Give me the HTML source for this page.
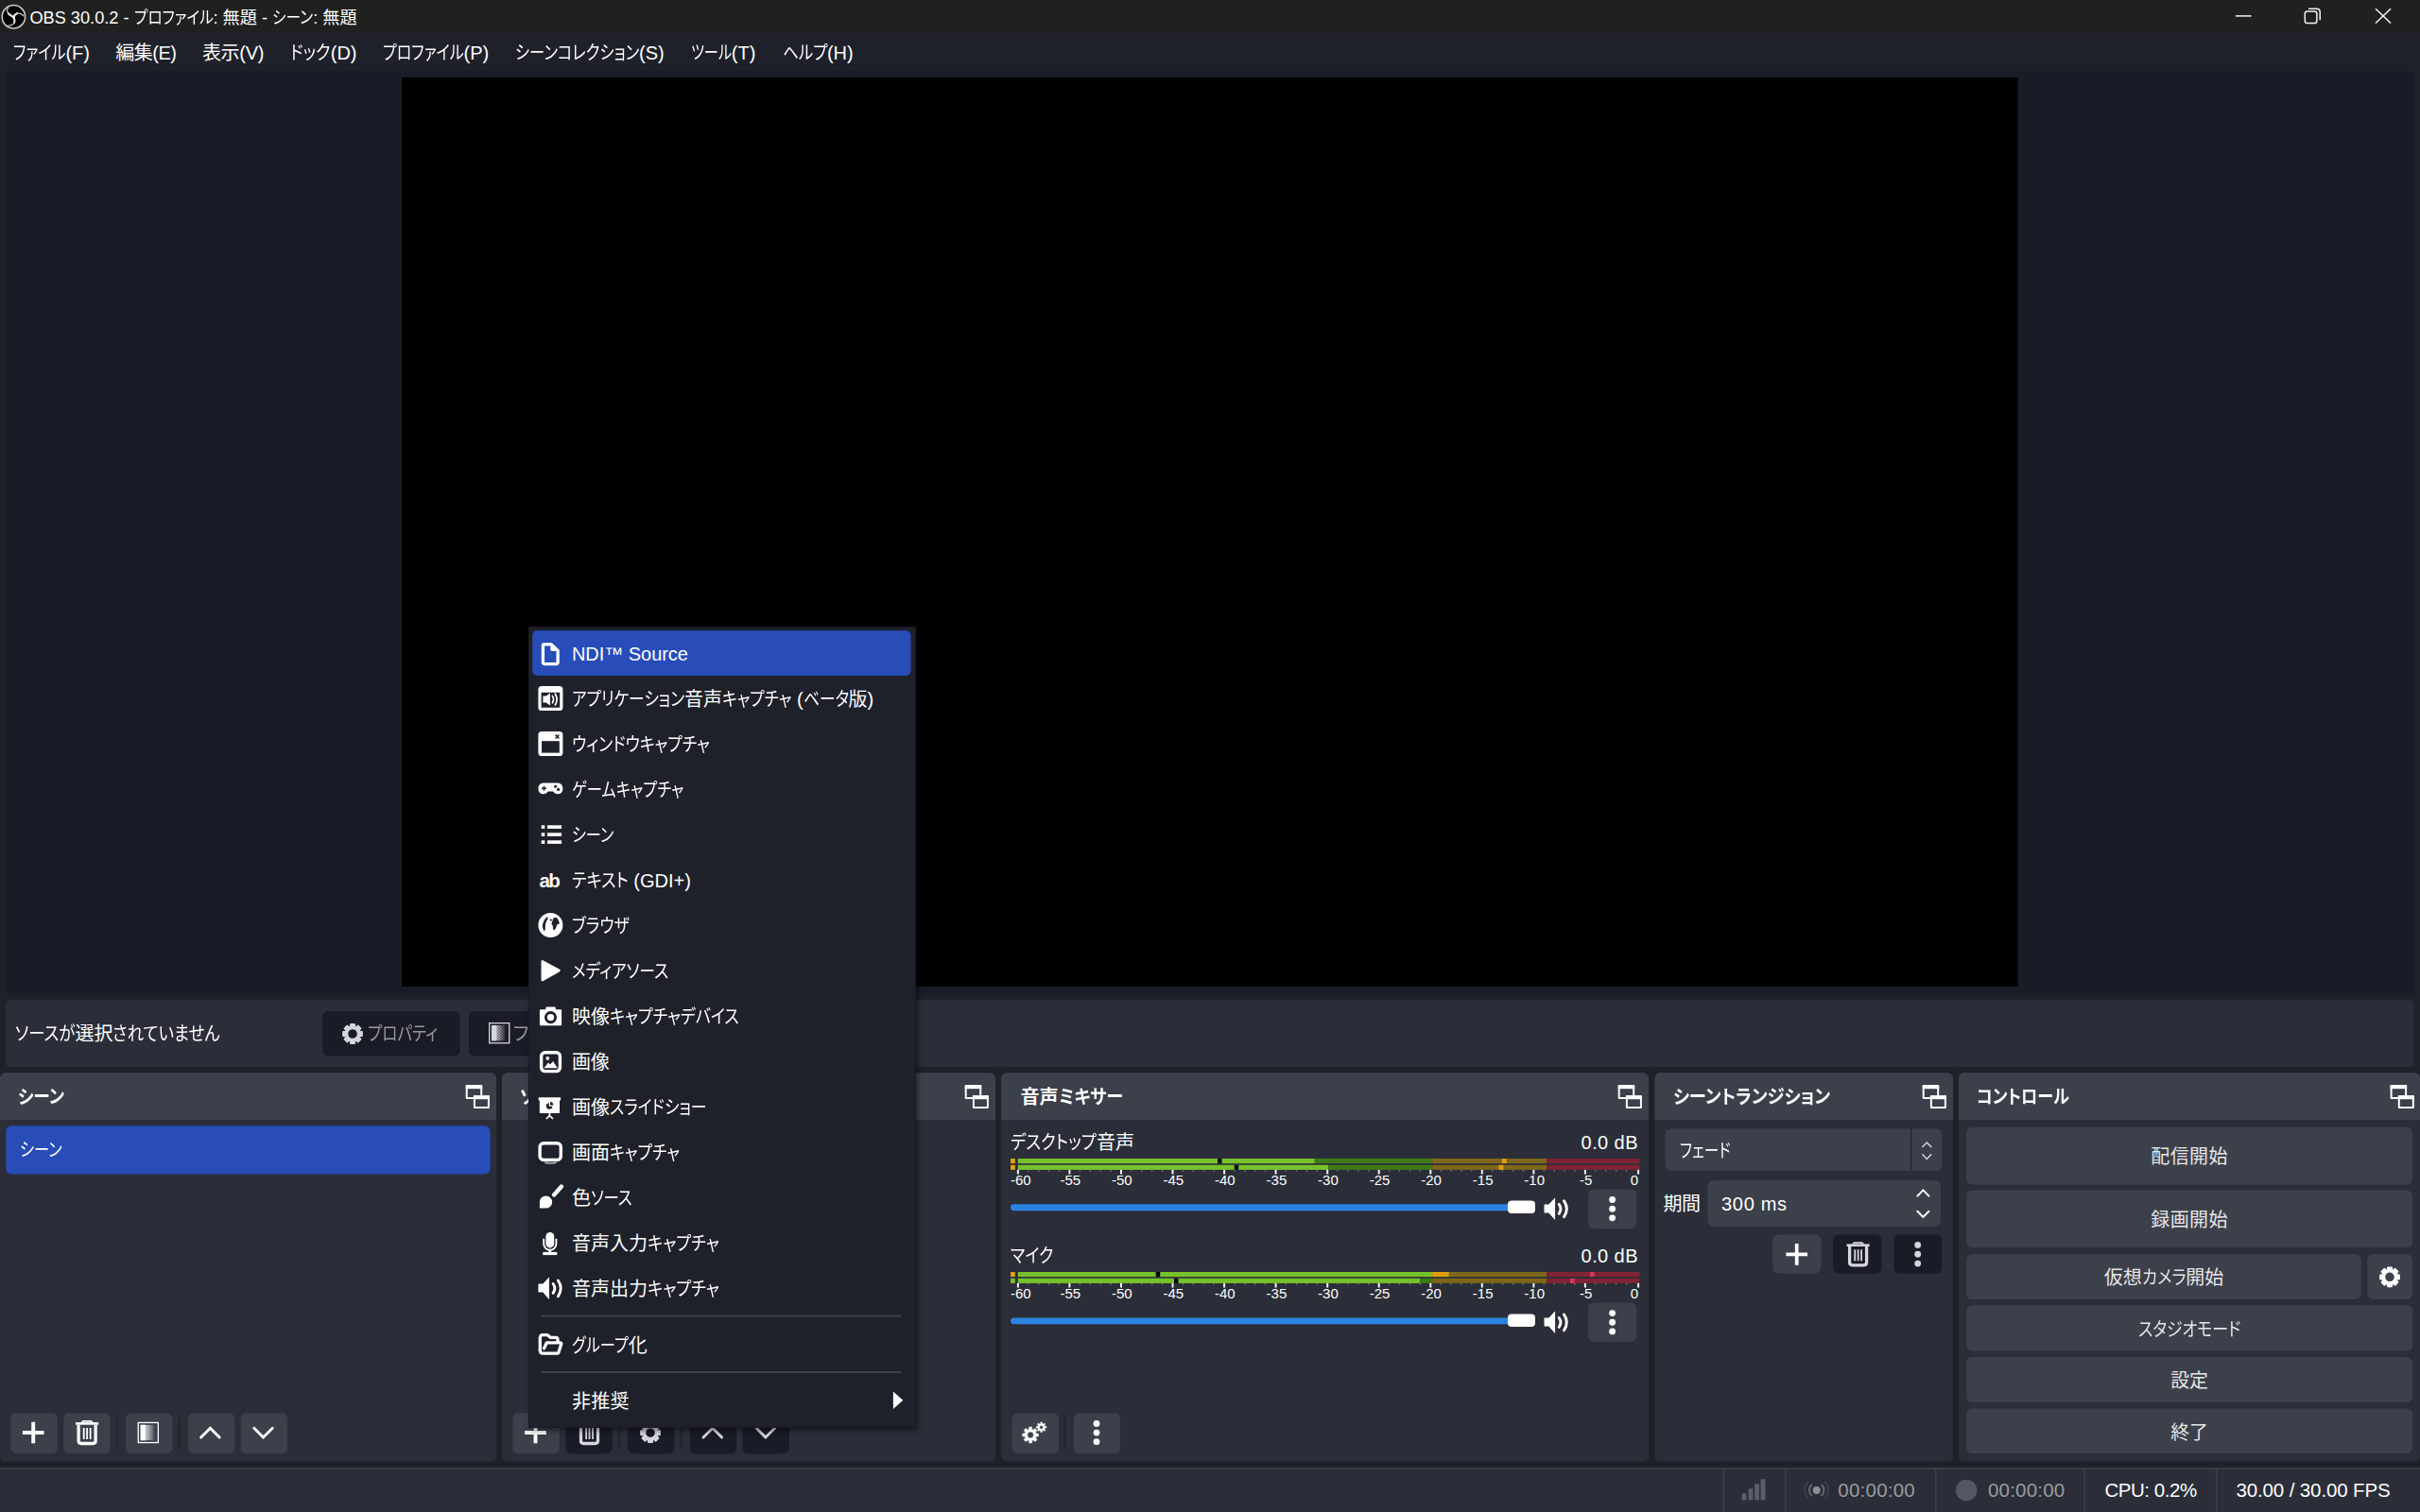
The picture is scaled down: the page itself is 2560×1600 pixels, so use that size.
<!DOCTYPE html>
<html lang="ja"><head><meta charset="utf-8"><title>OBS 30.0.2</title><style>
html,body{margin:0;padding:0;}
body{width:2560px;height:1600px;overflow:hidden;background:#1f212a;position:relative;font-family:"Liberation Sans","Noto Sans CJK JP",sans-serif;font-feature-settings:"palt";-webkit-font-smoothing:antialiased;}
.a{position:absolute;display:block;}
.t{position:absolute;white-space:nowrap;line-height:30px;}
.k{display:inline-block;}
.k>span{display:inline-block;transform-origin:0 50%;}
</style></head>
<body>
<svg class="a" style="left:0;top:0" width="2560" height="1600" viewBox="0 0 2560 1600">
<rect x="0.00" y="0.00" width="2560.00" height="35.00" fill="#202020"/>
<rect x="6.00" y="75.00" width="2547.00" height="977.00" fill="#191b26"/>
<rect x="425.00" y="82.00" width="1709.50" height="962.00" fill="#000"/>
<rect x="6.00" y="1058.00" width="2547.60" height="71.20" rx="5" fill="#2b2e38"/>
<path d="M6.00 1135.20H519.00A6.0 6.0 0 0 1 525.00 1141.20V1541.30A5.0 5.0 0 0 1 520.00 1546.30H5.00A5.0 5.0 0 0 1 0.00 1541.30V1141.20A6.0 6.0 0 0 1 6.00 1135.20Z" fill="#2b2e38"/>
<path d="M6.00 1135.20H519.00A6.0 6.0 0 0 1 525.00 1141.20V1184.90H0.00V1141.20A6.0 6.0 0 0 1 6.00 1135.20Z" fill="#3c404b"/>
<path d="M537.00 1135.20H1047.00A6.0 6.0 0 0 1 1053.00 1141.20V1541.30A5.0 5.0 0 0 1 1048.00 1546.30H536.00A5.0 5.0 0 0 1 531.00 1541.30V1141.20A6.0 6.0 0 0 1 537.00 1135.20Z" fill="#2b2e38"/>
<path d="M537.00 1135.20H1047.00A6.0 6.0 0 0 1 1053.00 1141.20V1184.90H531.00V1141.20A6.0 6.0 0 0 1 537.00 1135.20Z" fill="#3c404b"/>
<path d="M1065.00 1135.20H1738.00A6.0 6.0 0 0 1 1744.00 1141.20V1541.30A5.0 5.0 0 0 1 1739.00 1546.30H1064.00A5.0 5.0 0 0 1 1059.00 1541.30V1141.20A6.0 6.0 0 0 1 1065.00 1135.20Z" fill="#2b2e38"/>
<path d="M1065.00 1135.20H1738.00A6.0 6.0 0 0 1 1744.00 1141.20V1184.90H1059.00V1141.20A6.0 6.0 0 0 1 1065.00 1135.20Z" fill="#3c404b"/>
<path d="M1756.50 1135.20H2060.00A6.0 6.0 0 0 1 2066.00 1141.20V1541.30A5.0 5.0 0 0 1 2061.00 1546.30H1755.50A5.0 5.0 0 0 1 1750.50 1541.30V1141.20A6.0 6.0 0 0 1 1756.50 1135.20Z" fill="#2b2e38"/>
<path d="M1756.50 1135.20H2060.00A6.0 6.0 0 0 1 2066.00 1141.20V1184.90H1750.50V1141.20A6.0 6.0 0 0 1 1756.50 1135.20Z" fill="#3c404b"/>
<path d="M2078.00 1135.20H2554.00A6.0 6.0 0 0 1 2560.00 1141.20V1541.30A5.0 5.0 0 0 1 2555.00 1546.30H2077.00A5.0 5.0 0 0 1 2072.00 1541.30V1141.20A6.0 6.0 0 0 1 2078.00 1135.20Z" fill="#2b2e38"/>
<path d="M2078.00 1135.20H2554.00A6.0 6.0 0 0 1 2560.00 1141.20V1184.90H2072.00V1141.20A6.0 6.0 0 0 1 2078.00 1135.20Z" fill="#3c404b"/>
<rect x="0.00" y="1553.00" width="2560.00" height="47.00" fill="#2b2e38"/>
<rect x="0.00" y="1553.00" width="2560.00" height="1.50" fill="#3c404b"/>
<rect x="1822.50" y="1554.00" width="1.50" height="46.00" fill="#3c404b"/>
<rect x="1888.00" y="1554.00" width="1.50" height="46.00" fill="#3c404b"/>
<rect x="2047.00" y="1554.00" width="1.50" height="46.00" fill="#3c404b"/>
<rect x="2204.50" y="1554.00" width="1.50" height="46.00" fill="#3c404b"/>
<rect x="2344.00" y="1554.00" width="1.50" height="46.00" fill="#3c404b"/>
</svg>
<div class="t" style="left:31.4px;top:4.3px;font-size:18.2px;color:#fefefe;"><span id="t0">OBS 30.0.2 - <span class="k" style="width:83.91px"><span style="transform:scaleX(0.8610)">プロファイル</span></span>: 無題 - <span class="k" style="width:43.05px"><span style="transform:scaleX(0.8610)">シーン</span></span>: 無題</span></div>
<div class="t" style="left:14.0px;top:41.1px;font-size:20px;color:#fefefe;"><span id="t1"><span class="k" style="width:55.45px"><span style="transform:scaleX(0.8006)">ファイル</span></span>(F)</span></div>
<div class="t" style="left:122.3px;top:41.1px;font-size:20px;color:#fefefe;letter-spacing:-0.51px;"><span id="t2">編集(E)</span></div>
<div class="t" style="left:213.9px;top:41.1px;font-size:20px;color:#fefefe;letter-spacing:-0.27px;"><span id="t3">表示(V)</span></div>
<div class="t" style="left:307.3px;top:41.1px;font-size:20px;color:#fefefe;"><span id="t4"><span class="k" style="width:42.43px"><span style="transform:scaleX(0.8564)">ドック</span></span>(D)</span></div>
<div class="t" style="left:404.8px;top:41.1px;font-size:20px;color:#fefefe;"><span id="t5"><span class="k" style="width:85.73px"><span style="transform:scaleX(0.7999)">プロファイル</span></span>(P)</span></div>
<div class="t" style="left:544.9px;top:41.1px;font-size:20px;color:#fefefe;"><span id="t6"><span class="k" style="width:131.13px"><span style="transform:scaleX(0.8160)">シーンコレクション</span></span>(S)</span></div>
<div class="t" style="left:730.8px;top:41.1px;font-size:20px;color:#fefefe;"><span id="t7"><span class="k" style="width:43.05px"><span style="transform:scaleX(0.7576)">ツール</span></span>(T)</span></div>
<div class="t" style="left:827.5px;top:41.1px;font-size:20px;color:#fefefe;"><span id="t8"><span class="k" style="width:47.43px"><span style="transform:scaleX(0.8265)">ヘルプ</span></span>(H)</span></div>
<div class="t" style="left:16.0px;top:1079.1px;font-size:20px;color:#fefefe;"><span id="t9"><span class="k" style="width:63.43px"><span style="transform:scaleX(0.8715)">ソースが</span></span>選択<span class="k" style="width:113.57px"><span style="transform:scaleX(0.8715)">されていません</span></span></span></div>
<svg class="a" style="left:0;top:0" width="2560" height="1600" viewBox="0 0 2560 1600">
<rect x="341.00" y="1070.00" width="145.50" height="47.50" rx="6" fill="#191b26"/>
</svg>
<div class="t" style="left:389.3px;top:1079.1px;font-size:20px;color:#9a9a9e;"><span id="t10"><span class="k" style="width:73.90px"><span style="transform:scaleX(0.8290)">プロパティ</span></span></span></div>
<svg class="a" style="left:0;top:0" width="2560" height="1600" viewBox="0 0 2560 1600">
<rect x="496.00" y="1070.00" width="144.00" height="47.50" rx="6" fill="#191b26"/>
</svg>
<div class="t" style="left:543.0px;top:1079.1px;font-size:20px;color:#9a9a9e;"><span id="t11"><span class="k" style="width:66.00px"><span style="transform:scaleX(0.9717)">フィルタ</span></span></span></div>
<div class="t" style="left:19.3px;top:1145.6px;font-size:20px;color:#fefefe;font-weight:700;"><span id="t12"><span class="k" style="width:48.90px"><span style="transform:scaleX(0.8861)">シーン</span></span></span></div>
<div class="t" style="left:550.3px;top:1145.6px;font-size:20px;color:#fefefe;font-weight:700;"><span id="t13"><span class="k" style="width:48.70px"><span style="transform:scaleX(0.8802)">ソース</span></span></span></div>
<div class="t" style="left:1079.6px;top:1145.6px;font-size:20px;color:#fefefe;font-weight:700;"><span id="t14">音声<span class="k" style="width:68.40px"><span style="transform:scaleX(0.9168)">ミキサー</span></span></span></div>
<div class="t" style="left:1769.8px;top:1145.6px;font-size:20px;color:#fefefe;font-weight:700;"><span id="t15"><span class="k" style="width:166.20px"><span style="transform:scaleX(0.9181)">シーントランジション</span></span></span></div>
<div class="t" style="left:2091.4px;top:1145.6px;font-size:20px;color:#fefefe;font-weight:700;"><span id="t16"><span class="k" style="width:98.00px"><span style="transform:scaleX(0.8608)">コントロール</span></span></span></div>
<svg class="a" style="left:0;top:0" width="2560" height="1600" viewBox="0 0 2560 1600">
<rect x="6.30" y="1191.30" width="512.40" height="51.20" rx="6" fill="#284cb8"/>
</svg>
<div class="t" style="left:21.0px;top:1202.1px;font-size:20px;color:#fefefe;"><span id="t17"><span class="k" style="width:44.70px"><span style="transform:scaleX(0.8130)">シーン</span></span></span></div>
<svg class="a" style="left:0;top:0" width="2560" height="1600" viewBox="0 0 2560 1600">
<rect x="11.40" y="1495.20" width="49.30" height="43.00" rx="6" fill="#3c404b"/>
<rect x="67.20" y="1495.20" width="49.30" height="43.00" rx="6" fill="#3c404b"/>
<rect x="133.10" y="1495.20" width="49.30" height="43.00" rx="6" fill="#3c404b"/>
<rect x="198.90" y="1495.20" width="49.30" height="43.00" rx="6" fill="#3c404b"/>
<rect x="254.70" y="1495.20" width="49.30" height="43.00" rx="6" fill="#3c404b"/>
<rect x="123.00" y="1499.00" width="2.00" height="35.00" fill="#22242d"/>
<rect x="188.70" y="1499.00" width="2.00" height="35.00" fill="#22242d"/>
<rect x="542.40" y="1495.20" width="49.30" height="43.00" rx="6" fill="#3c404b"/>
<rect x="598.40" y="1495.20" width="49.30" height="43.00" rx="6" fill="#191b26"/>
<rect x="664.00" y="1495.20" width="49.30" height="43.00" rx="6" fill="#191b26"/>
<rect x="729.80" y="1495.20" width="49.30" height="43.00" rx="6" fill="#191b26"/>
<rect x="785.60" y="1495.20" width="49.30" height="43.00" rx="6" fill="#191b26"/>
<rect x="654.00" y="1499.00" width="2.00" height="35.00" fill="#22242d"/>
<rect x="719.70" y="1499.00" width="2.00" height="35.00" fill="#22242d"/>
<rect x="1070.60" y="1495.20" width="49.30" height="43.00" rx="6" fill="#3c404b"/>
<rect x="1135.80" y="1495.20" width="49.30" height="43.00" rx="6" fill="#3c404b"/>
<rect x="1125.40" y="1499.00" width="2.00" height="35.00" fill="#22242d"/>
</svg>
<div class="t" style="left:1069.0px;top:1194.3px;font-size:20px;color:#fefefe;"><span id="t18"><span class="k" style="width:90.90px"><span style="transform:scaleX(0.8723)">デスクトップ</span></span>音声</span></div>
<div class="t" style="left:1672.6px;top:1194.1px;font-size:20px;color:#fefefe;letter-spacing:0.41px;"><span id="t19">0.0 dB</span></div>
<svg class="a" style="left:0;top:0" width="2560" height="1600" viewBox="0 0 2560 1600">
<rect x="1069.00" y="1274.30" width="531.00" height="6.90" rx="3.5" fill="#2b83e0"/>
<rect x="1595.00" y="1270.50" width="29.00" height="13.50" rx="4" fill="#ffffff"/>
<rect x="1680.00" y="1258.50" width="51.30" height="41.50" rx="6" fill="#3c404b"/>
</svg>
<div class="t" style="left:1069.0px;top:1314.4px;font-size:20px;color:#fefefe;"><span id="t20"><span class="k" style="width:45.30px"><span style="transform:scaleX(0.8532)">マイク</span></span></span></div>
<div class="t" style="left:1672.6px;top:1314.2px;font-size:20px;color:#fefefe;letter-spacing:0.41px;"><span id="t21">0.0 dB</span></div>
<svg class="a" style="left:0;top:0" width="2560" height="1600" viewBox="0 0 2560 1600">
<rect x="1069.00" y="1394.40" width="531.00" height="6.90" rx="3.5" fill="#2b83e0"/>
<rect x="1595.00" y="1390.60" width="29.00" height="13.50" rx="4" fill="#ffffff"/>
<rect x="1680.00" y="1378.60" width="51.30" height="41.50" rx="6" fill="#3c404b"/>
<rect x="1069.00" y="1226.00" width="4.90" height="5.10" fill="#dca00a"/>
<rect x="1076.80" y="1226.00" width="438.40" height="5.10" fill="#3f7a16"/>
<rect x="1515.20" y="1226.00" width="121.00" height="5.10" fill="#7e671a"/>
<rect x="1636.20" y="1226.00" width="98.30" height="5.10" fill="#7e2435"/>
<rect x="1076.80" y="1226.00" width="313.70" height="5.10" fill="#76c22b"/>
<rect x="1288.00" y="1226.00" width="4.50" height="5.10" fill="#000"/>
<rect x="1588.80" y="1226.00" width="4.90" height="5.10" fill="#dca00a"/>
<rect x="1069.00" y="1232.80" width="4.90" height="5.10" fill="#dca00a"/>
<rect x="1076.80" y="1232.80" width="438.40" height="5.10" fill="#3f7a16"/>
<rect x="1515.20" y="1232.80" width="121.00" height="5.10" fill="#7e671a"/>
<rect x="1636.20" y="1232.80" width="98.30" height="5.10" fill="#7e2435"/>
<rect x="1076.80" y="1232.80" width="328.20" height="5.10" fill="#76c22b"/>
<rect x="1305.70" y="1232.80" width="4.50" height="5.10" fill="#000"/>
<rect x="1585.50" y="1232.80" width="4.90" height="5.10" fill="#dca00a"/>
<g transform="translate(1075.80 1237.90)"><rect x="0.1" y="0" width="2" height="4.6" fill="#f4f4f6"/><rect x="11.4" y="0" width="1.2" height="2" fill="#6b6e78"/><rect x="22.3" y="0" width="1.2" height="2" fill="#6b6e78"/><rect x="33.2" y="0" width="1.2" height="2" fill="#6b6e78"/><rect x="44.1" y="0" width="1.2" height="2" fill="#6b6e78"/><rect x="54.6" y="0" width="2" height="4.6" fill="#f4f4f6"/><rect x="66.0" y="0" width="1.2" height="2" fill="#6b6e78"/><rect x="76.9" y="0" width="1.2" height="2" fill="#6b6e78"/><rect x="87.8" y="0" width="1.2" height="2" fill="#6b6e78"/><rect x="98.7" y="0" width="1.2" height="2" fill="#6b6e78"/><rect x="109.2" y="0" width="2" height="4.6" fill="#f4f4f6"/><rect x="120.5" y="0" width="1.2" height="2" fill="#6b6e78"/><rect x="131.4" y="0" width="1.2" height="2" fill="#6b6e78"/><rect x="142.3" y="0" width="1.2" height="2" fill="#6b6e78"/><rect x="153.2" y="0" width="1.2" height="2" fill="#6b6e78"/><rect x="163.7" y="0" width="2" height="4.6" fill="#f4f4f6"/><rect x="175.0" y="0" width="1.2" height="2" fill="#6b6e78"/><rect x="186.0" y="0" width="1.2" height="2" fill="#6b6e78"/><rect x="196.9" y="0" width="1.2" height="2" fill="#6b6e78"/><rect x="207.8" y="0" width="1.2" height="2" fill="#6b6e78"/><rect x="218.3" y="0" width="2" height="4.6" fill="#f4f4f6"/><rect x="229.6" y="0" width="1.2" height="2" fill="#6b6e78"/><rect x="240.5" y="0" width="1.2" height="2" fill="#6b6e78"/><rect x="251.4" y="0" width="1.2" height="2" fill="#6b6e78"/><rect x="262.3" y="0" width="1.2" height="2" fill="#6b6e78"/><rect x="272.8" y="0" width="2" height="4.6" fill="#f4f4f6"/><rect x="284.1" y="0" width="1.2" height="2" fill="#6b6e78"/><rect x="295.0" y="0" width="1.2" height="2" fill="#6b6e78"/><rect x="306.0" y="0" width="1.2" height="2" fill="#6b6e78"/><rect x="316.9" y="0" width="1.2" height="2" fill="#6b6e78"/><rect x="327.4" y="0" width="2" height="4.6" fill="#f4f4f6"/><rect x="338.7" y="0" width="1.2" height="2" fill="#6b6e78"/><rect x="349.6" y="0" width="1.2" height="2" fill="#6b6e78"/><rect x="360.5" y="0" width="1.2" height="2" fill="#6b6e78"/><rect x="371.4" y="0" width="1.2" height="2" fill="#6b6e78"/><rect x="381.9" y="0" width="2" height="4.6" fill="#f4f4f6"/><rect x="393.2" y="0" width="1.2" height="2" fill="#6b6e78"/><rect x="404.1" y="0" width="1.2" height="2" fill="#6b6e78"/><rect x="415.0" y="0" width="1.2" height="2" fill="#6b6e78"/><rect x="426.0" y="0" width="1.2" height="2" fill="#6b6e78"/><rect x="436.5" y="0" width="2" height="4.6" fill="#f4f4f6"/><rect x="447.8" y="0" width="1.2" height="2" fill="#6b6e78"/><rect x="458.7" y="0" width="1.2" height="2" fill="#6b6e78"/><rect x="469.6" y="0" width="1.2" height="2" fill="#6b6e78"/><rect x="480.5" y="0" width="1.2" height="2" fill="#6b6e78"/><rect x="491.0" y="0" width="2" height="4.6" fill="#f4f4f6"/><rect x="502.3" y="0" width="1.2" height="2" fill="#6b6e78"/><rect x="513.2" y="0" width="1.2" height="2" fill="#6b6e78"/><rect x="524.1" y="0" width="1.2" height="2" fill="#6b6e78"/><rect x="535.0" y="0" width="1.2" height="2" fill="#6b6e78"/><rect x="545.6" y="0" width="2" height="4.6" fill="#f4f4f6"/><rect x="556.9" y="0" width="1.2" height="2" fill="#6b6e78"/><rect x="567.8" y="0" width="1.2" height="2" fill="#6b6e78"/><rect x="578.7" y="0" width="1.2" height="2" fill="#6b6e78"/><rect x="589.6" y="0" width="1.2" height="2" fill="#6b6e78"/><rect x="600.1" y="0" width="2" height="4.6" fill="#f4f4f6"/><rect x="611.4" y="0" width="1.2" height="2" fill="#6b6e78"/><rect x="622.3" y="0" width="1.2" height="2" fill="#6b6e78"/><rect x="633.2" y="0" width="1.2" height="2" fill="#6b6e78"/><rect x="644.1" y="0" width="1.2" height="2" fill="#6b6e78"/><rect x="656.3" y="0" width="2" height="4.6" fill="#f4f4f6"/></g>
</svg>
<div class="t" style="left:1069.0px;top:1233.8px;font-size:15px;color:#fefefe;"><span id="t22">-60</span></div>
<div class="t" style="left:1121.4px;top:1233.8px;font-size:15px;color:#fefefe;"><span id="t23">-55</span></div>
<div class="t" style="left:1175.9px;top:1233.8px;font-size:15px;color:#fefefe;"><span id="t24">-50</span></div>
<div class="t" style="left:1230.5px;top:1233.8px;font-size:15px;color:#fefefe;"><span id="t25">-45</span></div>
<div class="t" style="left:1285.0px;top:1233.8px;font-size:15px;color:#fefefe;"><span id="t26">-40</span></div>
<div class="t" style="left:1339.6px;top:1233.8px;font-size:15px;color:#fefefe;"><span id="t27">-35</span></div>
<div class="t" style="left:1394.1px;top:1233.8px;font-size:15px;color:#fefefe;"><span id="t28">-30</span></div>
<div class="t" style="left:1448.7px;top:1233.8px;font-size:15px;color:#fefefe;"><span id="t29">-25</span></div>
<div class="t" style="left:1503.2px;top:1233.8px;font-size:15px;color:#fefefe;"><span id="t30">-20</span></div>
<div class="t" style="left:1557.8px;top:1233.8px;font-size:15px;color:#fefefe;"><span id="t31">-15</span></div>
<div class="t" style="left:1612.3px;top:1233.8px;font-size:15px;color:#fefefe;"><span id="t32">-10</span></div>
<div class="t" style="left:1671.0px;top:1233.8px;font-size:15px;color:#fefefe;"><span id="t33">-5</span></div>
<div class="t" style="left:1724.7px;top:1233.8px;font-size:15px;color:#fefefe;letter-spacing:0.01px;"><span id="t34">0</span></div>
<svg class="a" style="left:0;top:0" width="2560" height="1600" viewBox="0 0 2560 1600">
<rect x="1069.00" y="1346.00" width="4.90" height="5.10" fill="#dca00a"/>
<rect x="1076.80" y="1346.00" width="438.40" height="5.10" fill="#3f7a16"/>
<rect x="1515.20" y="1346.00" width="121.00" height="5.10" fill="#7e671a"/>
<rect x="1636.20" y="1346.00" width="98.30" height="5.10" fill="#7e2435"/>
<rect x="1076.80" y="1346.00" width="438.40" height="5.10" fill="#76c22b"/>
<rect x="1515.20" y="1346.00" width="17.40" height="5.10" fill="#dca00a"/>
<rect x="1222.70" y="1346.00" width="4.50" height="5.10" fill="#000"/>
<rect x="1681.80" y="1346.00" width="4.90" height="5.10" fill="#d83458"/>
<rect x="1069.00" y="1352.80" width="4.90" height="5.10" fill="#76c22b"/>
<rect x="1076.80" y="1352.80" width="438.40" height="5.10" fill="#3f7a16"/>
<rect x="1515.20" y="1352.80" width="121.00" height="5.10" fill="#7e671a"/>
<rect x="1636.20" y="1352.80" width="98.30" height="5.10" fill="#7e2435"/>
<rect x="1076.80" y="1352.80" width="425.20" height="5.10" fill="#76c22b"/>
<rect x="1242.00" y="1352.80" width="4.50" height="5.10" fill="#000"/>
<rect x="1661.00" y="1352.80" width="4.90" height="5.10" fill="#d83458"/>
<g transform="translate(1075.80 1357.90)"><rect x="0.1" y="0" width="2" height="4.6" fill="#f4f4f6"/><rect x="11.4" y="0" width="1.2" height="2" fill="#6b6e78"/><rect x="22.3" y="0" width="1.2" height="2" fill="#6b6e78"/><rect x="33.2" y="0" width="1.2" height="2" fill="#6b6e78"/><rect x="44.1" y="0" width="1.2" height="2" fill="#6b6e78"/><rect x="54.6" y="0" width="2" height="4.6" fill="#f4f4f6"/><rect x="66.0" y="0" width="1.2" height="2" fill="#6b6e78"/><rect x="76.9" y="0" width="1.2" height="2" fill="#6b6e78"/><rect x="87.8" y="0" width="1.2" height="2" fill="#6b6e78"/><rect x="98.7" y="0" width="1.2" height="2" fill="#6b6e78"/><rect x="109.2" y="0" width="2" height="4.6" fill="#f4f4f6"/><rect x="120.5" y="0" width="1.2" height="2" fill="#6b6e78"/><rect x="131.4" y="0" width="1.2" height="2" fill="#6b6e78"/><rect x="142.3" y="0" width="1.2" height="2" fill="#6b6e78"/><rect x="153.2" y="0" width="1.2" height="2" fill="#6b6e78"/><rect x="163.7" y="0" width="2" height="4.6" fill="#f4f4f6"/><rect x="175.0" y="0" width="1.2" height="2" fill="#6b6e78"/><rect x="186.0" y="0" width="1.2" height="2" fill="#6b6e78"/><rect x="196.9" y="0" width="1.2" height="2" fill="#6b6e78"/><rect x="207.8" y="0" width="1.2" height="2" fill="#6b6e78"/><rect x="218.3" y="0" width="2" height="4.6" fill="#f4f4f6"/><rect x="229.6" y="0" width="1.2" height="2" fill="#6b6e78"/><rect x="240.5" y="0" width="1.2" height="2" fill="#6b6e78"/><rect x="251.4" y="0" width="1.2" height="2" fill="#6b6e78"/><rect x="262.3" y="0" width="1.2" height="2" fill="#6b6e78"/><rect x="272.8" y="0" width="2" height="4.6" fill="#f4f4f6"/><rect x="284.1" y="0" width="1.2" height="2" fill="#6b6e78"/><rect x="295.0" y="0" width="1.2" height="2" fill="#6b6e78"/><rect x="306.0" y="0" width="1.2" height="2" fill="#6b6e78"/><rect x="316.9" y="0" width="1.2" height="2" fill="#6b6e78"/><rect x="327.4" y="0" width="2" height="4.6" fill="#f4f4f6"/><rect x="338.7" y="0" width="1.2" height="2" fill="#6b6e78"/><rect x="349.6" y="0" width="1.2" height="2" fill="#6b6e78"/><rect x="360.5" y="0" width="1.2" height="2" fill="#6b6e78"/><rect x="371.4" y="0" width="1.2" height="2" fill="#6b6e78"/><rect x="381.9" y="0" width="2" height="4.6" fill="#f4f4f6"/><rect x="393.2" y="0" width="1.2" height="2" fill="#6b6e78"/><rect x="404.1" y="0" width="1.2" height="2" fill="#6b6e78"/><rect x="415.0" y="0" width="1.2" height="2" fill="#6b6e78"/><rect x="426.0" y="0" width="1.2" height="2" fill="#6b6e78"/><rect x="436.5" y="0" width="2" height="4.6" fill="#f4f4f6"/><rect x="447.8" y="0" width="1.2" height="2" fill="#6b6e78"/><rect x="458.7" y="0" width="1.2" height="2" fill="#6b6e78"/><rect x="469.6" y="0" width="1.2" height="2" fill="#6b6e78"/><rect x="480.5" y="0" width="1.2" height="2" fill="#6b6e78"/><rect x="491.0" y="0" width="2" height="4.6" fill="#f4f4f6"/><rect x="502.3" y="0" width="1.2" height="2" fill="#6b6e78"/><rect x="513.2" y="0" width="1.2" height="2" fill="#6b6e78"/><rect x="524.1" y="0" width="1.2" height="2" fill="#6b6e78"/><rect x="535.0" y="0" width="1.2" height="2" fill="#6b6e78"/><rect x="545.6" y="0" width="2" height="4.6" fill="#f4f4f6"/><rect x="556.9" y="0" width="1.2" height="2" fill="#6b6e78"/><rect x="567.8" y="0" width="1.2" height="2" fill="#6b6e78"/><rect x="578.7" y="0" width="1.2" height="2" fill="#6b6e78"/><rect x="589.6" y="0" width="1.2" height="2" fill="#6b6e78"/><rect x="600.1" y="0" width="2" height="4.6" fill="#f4f4f6"/><rect x="611.4" y="0" width="1.2" height="2" fill="#6b6e78"/><rect x="622.3" y="0" width="1.2" height="2" fill="#6b6e78"/><rect x="633.2" y="0" width="1.2" height="2" fill="#6b6e78"/><rect x="644.1" y="0" width="1.2" height="2" fill="#6b6e78"/><rect x="656.3" y="0" width="2" height="4.6" fill="#f4f4f6"/></g>
</svg>
<div class="t" style="left:1069.0px;top:1353.8px;font-size:15px;color:#fefefe;"><span id="t35">-60</span></div>
<div class="t" style="left:1121.4px;top:1353.8px;font-size:15px;color:#fefefe;"><span id="t36">-55</span></div>
<div class="t" style="left:1175.9px;top:1353.8px;font-size:15px;color:#fefefe;"><span id="t37">-50</span></div>
<div class="t" style="left:1230.5px;top:1353.8px;font-size:15px;color:#fefefe;"><span id="t38">-45</span></div>
<div class="t" style="left:1285.0px;top:1353.8px;font-size:15px;color:#fefefe;"><span id="t39">-40</span></div>
<div class="t" style="left:1339.6px;top:1353.8px;font-size:15px;color:#fefefe;"><span id="t40">-35</span></div>
<div class="t" style="left:1394.1px;top:1353.8px;font-size:15px;color:#fefefe;"><span id="t41">-30</span></div>
<div class="t" style="left:1448.7px;top:1353.8px;font-size:15px;color:#fefefe;"><span id="t42">-25</span></div>
<div class="t" style="left:1503.2px;top:1353.8px;font-size:15px;color:#fefefe;"><span id="t43">-20</span></div>
<div class="t" style="left:1557.8px;top:1353.8px;font-size:15px;color:#fefefe;"><span id="t44">-15</span></div>
<div class="t" style="left:1612.3px;top:1353.8px;font-size:15px;color:#fefefe;"><span id="t45">-10</span></div>
<div class="t" style="left:1671.0px;top:1353.8px;font-size:15px;color:#fefefe;"><span id="t46">-5</span></div>
<div class="t" style="left:1724.7px;top:1353.8px;font-size:15px;color:#fefefe;letter-spacing:0.01px;"><span id="t47">0</span></div>
<svg class="a" style="left:0;top:0" width="2560" height="1600" viewBox="0 0 2560 1600">
<rect x="1761.50" y="1194.50" width="292.70" height="44.50" rx="6" fill="#3c404b"/>
<rect x="2020.90" y="1194.50" width="1.40" height="44.50" fill="#24262f"/>
</svg>
<div class="t" style="left:1776.9px;top:1202.6px;font-size:20px;color:#fefefe;"><span id="t48"><span class="k" style="width:53.70px"><span style="transform:scaleX(0.7825)">フェード</span></span></span></div>
<div class="t" style="left:1759.4px;top:1259.1px;font-size:20px;color:#fefefe;letter-spacing:-0.30px;"><span id="t49">期間</span></div>
<svg class="a" style="left:0;top:0" width="2560" height="1600" viewBox="0 0 2560 1600">
<rect x="1806.50" y="1249.00" width="246.50" height="49.00" rx="6" fill="#3c404b"/>
</svg>
<div class="t" style="left:1821.0px;top:1259.1px;font-size:20px;color:#fefefe;letter-spacing:0.70px;"><span id="t50">300 ms</span></div>
<svg class="a" style="left:0;top:0" width="2560" height="1600" viewBox="0 0 2560 1600">
<rect x="1875.20" y="1306.50" width="51.30" height="41.10" rx="6" fill="#3c404b"/>
<rect x="1939.00" y="1306.50" width="51.50" height="41.10" rx="6" fill="#191b26"/>
<rect x="2003.40" y="1306.50" width="50.80" height="41.10" rx="6" fill="#191b26"/>
<rect x="2080.30" y="1192.70" width="471.70" height="60.70" rx="6" fill="#3c404b"/>
</svg>
<div class="t" style="left:2275.2px;top:1209.3px;font-size:20px;color:#e6e6e8;letter-spacing:0.45px;"><span id="t51">配信開始</span></div>
<svg class="a" style="left:0;top:0" width="2560" height="1600" viewBox="0 0 2560 1600">
<rect x="2080.30" y="1259.60" width="471.70" height="60.70" rx="6" fill="#3c404b"/>
</svg>
<div class="t" style="left:2275.2px;top:1276.2px;font-size:20px;color:#e6e6e8;letter-spacing:0.45px;"><span id="t52">録画開始</span></div>
<svg class="a" style="left:0;top:0" width="2560" height="1600" viewBox="0 0 2560 1600">
<rect x="2080.30" y="1327.30" width="417.30" height="47.70" rx="6" fill="#3c404b"/>
</svg>
<div class="t" style="left:2225.7px;top:1337.4px;font-size:20px;color:#e6e6e8;"><span id="t53">仮想<span class="k" style="width:46.50px"><span style="transform:scaleX(0.8722)">カメラ</span></span>開始</span></div>
<svg class="a" style="left:0;top:0" width="2560" height="1600" viewBox="0 0 2560 1600">
<rect x="2504.30" y="1327.30" width="47.70" height="47.70" rx="6" fill="#3c404b"/>
<rect x="2080.30" y="1381.30" width="471.70" height="48.10" rx="6" fill="#3c404b"/>
</svg>
<div class="t" style="left:2262.0px;top:1391.6px;font-size:20px;color:#e6e6e8;"><span id="t54"><span class="k" style="width:108.40px"><span style="transform:scaleX(0.8470)">スタジオモード</span></span></span></div>
<svg class="a" style="left:0;top:0" width="2560" height="1600" viewBox="0 0 2560 1600">
<rect x="2080.30" y="1436.00" width="471.70" height="48.00" rx="6" fill="#3c404b"/>
</svg>
<div class="t" style="left:2296.3px;top:1446.3px;font-size:20px;color:#e6e6e8;letter-spacing:-0.20px;"><span id="t55">設定</span></div>
<svg class="a" style="left:0;top:0" width="2560" height="1600" viewBox="0 0 2560 1600">
<rect x="2080.30" y="1490.40" width="471.70" height="47.60" rx="6" fill="#3c404b"/>
</svg>
<div class="t" style="left:2296.3px;top:1500.5px;font-size:20px;color:#e6e6e8;letter-spacing:-0.20px;"><span id="t56">終了</span></div>
<div class="t" style="left:1944.3px;top:1562.4px;font-size:20.5px;color:#9a9a9e;letter-spacing:0.24px;"><span id="t57">00:00:00</span></div>
<div class="t" style="left:2103.0px;top:1562.4px;font-size:20.5px;color:#9a9a9e;letter-spacing:0.20px;"><span id="t58">00:00:00</span></div>
<div class="t" style="left:2226.5px;top:1562.4px;font-size:20.5px;color:#fefefe;letter-spacing:-0.47px;"><span id="t59">CPU: 0.2%</span></div>
<div class="t" style="left:2365.4px;top:1562.4px;font-size:20.5px;color:#fefefe;letter-spacing:-0.12px;"><span id="t60">30.00 / 30.00 FPS</span></div>
<svg class="a" style="left:0;top:0" width="2560" height="1600" viewBox="0 0 2560 1600">
<rect x="2068.80" y="1565.80" width="22.60" height="22.60" rx="12" fill="#545762"/>
<g transform="translate(0.40 3.75)"><circle cx="14" cy="14" r="12.2" fill="#000" stroke="#cfcfcf" stroke-width="1.5"/><g fill="none" stroke="#e4e4e4" stroke-linecap="round"><path d="M14 14.2Q9.4 12.6 7.7 9.6Q6.6 7 8.4 3.8000000000000007" stroke-width="1.1"/><path d="M14 14.2Q10.6 13.1 8.6 10.8" stroke-width="2.1"/><path d="M14 14.2Q15.2 10.8 18.6 10.2Q22.2 10.2 24.6 13.2" stroke-width="1.1"/><path d="M14 14.2Q14.9 11.4 17.6 10.4" stroke-width="2.1"/><path d="M14 14.2Q16.2 18.6 14.2 21.2Q12 23.6 8.4 23.2" stroke-width="1.1"/><path d="M14 14.2Q15.8 17.6 14.8 20" stroke-width="2.1"/></g><circle cx="14" cy="14.2" r="1.5" fill="#f4f4f4"/></g>
<g transform="translate(2364.00 15.00)"><path d="M1 1.9H17.5" stroke="#f4f4f4" stroke-width="1.5" fill="none"/></g>
<g transform="translate(2437.00 8.00)"><rect x="1.3" y="3.9" width="12.6" height="12.6" rx="2.6" fill="none" stroke="#f4f4f4" stroke-width="1.5"/><path d="M5 1.3H13.6Q17.2 1.3 17.2 4.9V13.2" fill="none" stroke="#f4f4f4" stroke-width="1.5"/></g>
<g transform="translate(2512.00 8.00)"><path d="M1 1.3L17 16.5M17 1.3L1 16.5" stroke="#f4f4f4" stroke-width="1.5" fill="none"/></g>
<g transform="translate(1842.60 1565.30)"><rect x="0" y="14.9" width="4.8" height="7.4" rx="0.8" fill="#5a5e69"/><rect x="7" y="9.9" width="4.8" height="12.4" rx="0.8" fill="#5a5e69"/><rect x="13.6" y="4.9" width="4.8" height="17.4" rx="0.8" fill="#5a5e69"/><rect x="20" y="0" width="4.8" height="22.3" rx="0.8" fill="#5a5e69"/></g>
<g transform="translate(1908.00 1563.00)"><circle cx="13.7" cy="13.9" r="4" fill="#8d8f97"/><g fill="none" stroke="#6b6e78" stroke-width="1.7" stroke-linecap="round"><path d="M8.2 8.4A7.8 7.8 0 0 0 8.2 19.4"/><path d="M19.2 8.4A7.8 7.8 0 0 1 19.2 19.4"/></g><g fill="none" stroke="#3f424c" stroke-width="1.6" stroke-linecap="round"><path d="M4.8 5.2A12.4 12.4 0 0 0 4.8 22.6"/><path d="M22.6 5.2A12.4 12.4 0 0 1 22.6 22.6"/></g></g>
<g transform="translate(359.00 1080.00)"><path d="M11.57 6.90 L11.91 3.91 L16.09 3.91 L16.43 6.90 L17.30 7.26 L19.65 5.39 L22.61 8.35 L20.74 10.70 L21.10 11.57 L24.09 11.91 L24.09 16.09 L21.10 16.43 L20.74 17.30 L22.61 19.65 L19.65 22.61 L17.30 20.74 L16.43 21.10 L16.09 24.09 L11.91 24.09 L11.57 21.10 L10.70 20.74 L8.35 22.61 L5.39 19.65 L7.26 17.30 L6.90 16.43 L3.91 16.09 L3.91 11.91 L6.90 11.57 L7.26 10.70 L5.39 8.35 L8.35 5.39 L10.70 7.26Z M8.40 14.00 a5.6 5.6 0 1 0 11.2 0 a5.6 5.6 0 1 0 -11.2 0Z" fill="#d4d5de" fill-rule="evenodd" stroke="#d4d5de" stroke-width="1.6" stroke-linejoin="round"/></g>
<g transform="translate(517.00 1082.00)"><defs><linearGradient id="fg1" x1="0" x2="1" y1="0" y2="0"><stop offset="0" stop-color="#fff"/><stop offset="1" stop-color="#fff" stop-opacity="0.08"/></linearGradient><pattern id="fp1" width="3" height="3" patternUnits="userSpaceOnUse"><rect width="1.5" height="1.5" fill="#d4d5de"/><rect x="1.5" y="1.5" width="1.5" height="1.5" fill="#d4d5de"/></pattern><mask id="fm1"><rect x="8" y="2.9" width="9.6" height="16.599999999999998" fill="url(#fg1)"/></mask></defs><rect x="0.65" y="0.65" width="21.099999999999998" height="21.099999999999998" fill="none" stroke="#d4d5de" stroke-width="1.3"/><rect x="2.9" y="2.9" width="5.4" height="16.599999999999998" fill="#d4d5de"/><rect x="8" y="2.9" width="9.6" height="16.599999999999998" fill="#d4d5de" opacity="0.45" mask="url(#fm1)"/><rect x="8" y="2.9" width="9.6" height="16.599999999999998" fill="url(#fp1)" mask="url(#fm1)"/></g>
<g transform="translate(492.70 1148.20)"><path d="M1 1H16.5V13.8H1Z" fill="none" stroke="#fefefe" stroke-width="2" stroke-linejoin="round"/><path d="M0 0H17.5V4H0Z" fill="#fefefe"/><path d="M9.2 12H24.2V23.9H9.2Z" fill="#3c404b" stroke="#fefefe" stroke-width="2" stroke-linejoin="round"/><path d="M8.2 11H25.2V15H8.2Z" fill="#fefefe"/></g>
<g transform="translate(1020.70 1148.20)"><path d="M1 1H16.5V13.8H1Z" fill="none" stroke="#fefefe" stroke-width="2" stroke-linejoin="round"/><path d="M0 0H17.5V4H0Z" fill="#fefefe"/><path d="M9.2 12H24.2V23.9H9.2Z" fill="#3c404b" stroke="#fefefe" stroke-width="2" stroke-linejoin="round"/><path d="M8.2 11H25.2V15H8.2Z" fill="#fefefe"/></g>
<g transform="translate(1711.70 1148.20)"><path d="M1 1H16.5V13.8H1Z" fill="none" stroke="#fefefe" stroke-width="2" stroke-linejoin="round"/><path d="M0 0H17.5V4H0Z" fill="#fefefe"/><path d="M9.2 12H24.2V23.9H9.2Z" fill="#3c404b" stroke="#fefefe" stroke-width="2" stroke-linejoin="round"/><path d="M8.2 11H25.2V15H8.2Z" fill="#fefefe"/></g>
<g transform="translate(2033.70 1148.20)"><path d="M1 1H16.5V13.8H1Z" fill="none" stroke="#fefefe" stroke-width="2" stroke-linejoin="round"/><path d="M0 0H17.5V4H0Z" fill="#fefefe"/><path d="M9.2 12H24.2V23.9H9.2Z" fill="#3c404b" stroke="#fefefe" stroke-width="2" stroke-linejoin="round"/><path d="M8.2 11H25.2V15H8.2Z" fill="#fefefe"/></g>
<g transform="translate(2528.60 1148.20)"><path d="M1 1H16.5V13.8H1Z" fill="none" stroke="#fefefe" stroke-width="2" stroke-linejoin="round"/><path d="M0 0H17.5V4H0Z" fill="#fefefe"/><path d="M9.2 12H24.2V23.9H9.2Z" fill="#3c404b" stroke="#fefefe" stroke-width="2" stroke-linejoin="round"/><path d="M8.2 11H25.2V15H8.2Z" fill="#fefefe"/></g>
<g transform="translate(23.90 1504.70)"><path d="M0 11.3H22.6M11.3 0V22.6" stroke="#fefefe" stroke-width="3.9" fill="none"/></g>
<g transform="translate(79.00 1502.70)"><path d="M1 3.7H25.2" stroke="#fefefe" stroke-width="2.6" fill="none"/><path d="M7.4 2.6L9 1.1H17.2L18.8 2.6" stroke="#fefefe" stroke-width="1.8" fill="none" stroke-linejoin="round"/><path d="M4.1 5V21.8Q4.1 24.8 7.1 24.8H19.1Q22.1 24.8 22.1 21.8V5" stroke="#fefefe" stroke-width="3.3" fill="none"/><path d="M9.7 8.3V20.3M13.1 8.3V20.3M16.6 8.3V20.3" stroke="#fefefe" stroke-width="1.8" fill="none"/></g>
<g transform="translate(145.60 1504.80)"><defs><linearGradient id="fg2" x1="0" x2="1" y1="0" y2="0"><stop offset="0" stop-color="#fff"/><stop offset="1" stop-color="#fff" stop-opacity="0.08"/></linearGradient><pattern id="fp2" width="3" height="3" patternUnits="userSpaceOnUse"><rect width="1.5" height="1.5" fill="#fefefe"/><rect x="1.5" y="1.5" width="1.5" height="1.5" fill="#fefefe"/></pattern><mask id="fm2"><rect x="8" y="2.9" width="9.6" height="16.599999999999998" fill="url(#fg2)"/></mask></defs><rect x="0.65" y="0.65" width="21.099999999999998" height="21.099999999999998" fill="none" stroke="#fefefe" stroke-width="1.3"/><rect x="2.9" y="2.9" width="5.4" height="16.599999999999998" fill="#fefefe"/><rect x="8" y="2.9" width="9.6" height="16.599999999999998" fill="#fefefe" opacity="0.45" mask="url(#fm2)"/><rect x="8" y="2.9" width="9.6" height="16.599999999999998" fill="url(#fp2)" mask="url(#fm2)"/></g>
<g transform="translate(210.65 1509.25)"><path d="M2 11.7L11.75 2L21.5 11.7" stroke="#fefefe" stroke-width="2.9" fill="none" stroke-linecap="round" stroke-linejoin="miter"/></g>
<g transform="translate(266.75 1509.25)"><path d="M2 2L11.75 11.7L21.5 2" stroke="#fefefe" stroke-width="2.9" fill="none" stroke-linecap="round" stroke-linejoin="miter"/></g>
<g transform="translate(555.20 1504.70)"><path d="M0 11.3H22.6M11.3 0V22.6" stroke="#fefefe" stroke-width="3.9" fill="none"/></g>
<g transform="translate(610.40 1502.70)"><path d="M1 3.7H25.2" stroke="#d4d5de" stroke-width="2.6" fill="none"/><path d="M7.4 2.6L9 1.1H17.2L18.8 2.6" stroke="#d4d5de" stroke-width="1.8" fill="none" stroke-linejoin="round"/><path d="M4.1 5V21.8Q4.1 24.8 7.1 24.8H19.1Q22.1 24.8 22.1 21.8V5" stroke="#d4d5de" stroke-width="3.3" fill="none"/><path d="M9.7 8.3V20.3M13.1 8.3V20.3M16.6 8.3V20.3" stroke="#d4d5de" stroke-width="1.8" fill="none"/></g>
<g transform="translate(674.00 1502.20)"><path d="M11.57 6.90 L11.91 3.91 L16.09 3.91 L16.43 6.90 L17.30 7.26 L19.65 5.39 L22.61 8.35 L20.74 10.70 L21.10 11.57 L24.09 11.91 L24.09 16.09 L21.10 16.43 L20.74 17.30 L22.61 19.65 L19.65 22.61 L17.30 20.74 L16.43 21.10 L16.09 24.09 L11.91 24.09 L11.57 21.10 L10.70 20.74 L8.35 22.61 L5.39 19.65 L7.26 17.30 L6.90 16.43 L3.91 16.09 L3.91 11.91 L6.90 11.57 L7.26 10.70 L5.39 8.35 L8.35 5.39 L10.70 7.26Z M8.40 14.00 a5.6 5.6 0 1 0 11.2 0 a5.6 5.6 0 1 0 -11.2 0Z" fill="#d4d5de" fill-rule="evenodd" stroke="#d4d5de" stroke-width="1.6" stroke-linejoin="round"/></g>
<g transform="translate(742.05 1509.25)"><path d="M2 11.7L11.75 2L21.5 11.7" stroke="#d4d5de" stroke-width="2.9" fill="none" stroke-linecap="round" stroke-linejoin="miter"/></g>
<g transform="translate(798.15 1509.25)"><path d="M2 2L11.75 11.7L21.5 2" stroke="#d4d5de" stroke-width="2.9" fill="none" stroke-linecap="round" stroke-linejoin="miter"/></g>
<g transform="translate(1079.10 1507.50)"><path d="M9.30 5.14 L9.67 2.60 L12.33 2.60 L12.70 5.14 L13.94 5.65 L16.00 4.12 L17.88 6.00 L16.35 8.06 L16.86 9.30 L19.40 9.67 L19.40 12.33 L16.86 12.70 L16.35 13.94 L17.88 16.00 L16.00 17.88 L13.94 16.35 L12.70 16.86 L12.33 19.40 L9.67 19.40 L9.30 16.86 L8.06 16.35 L6.00 17.88 L4.12 16.00 L5.65 13.94 L5.14 12.70 L2.60 12.33 L2.60 9.67 L5.14 9.30 L5.65 8.06 L4.12 6.00 L6.00 4.12 L8.06 5.65Z M7.60 11.00 a3.4 3.4 0 1 0 6.8 0 a3.4 3.4 0 1 0 -6.8 0Z" fill="#fefefe" fill-rule="evenodd" stroke="#fefefe" stroke-width="0.6" stroke-linejoin="round"/></g>
<g transform="translate(1093.60 1502.30)"><path d="M6.97 4.45 L7.24 2.65 L8.76 2.65 L9.03 4.45 L9.78 4.76 L11.24 3.68 L12.32 4.76 L11.24 6.22 L11.55 6.97 L13.35 7.24 L13.35 8.76 L11.55 9.03 L11.24 9.78 L12.32 11.24 L11.24 12.32 L9.78 11.24 L9.03 11.55 L8.76 13.35 L7.24 13.35 L6.97 11.55 L6.22 11.24 L4.76 12.32 L3.68 11.24 L4.76 9.78 L4.45 9.03 L2.65 8.76 L2.65 7.24 L4.45 6.97 L4.76 6.22 L3.68 4.76 L4.76 3.68 L6.22 4.76Z M6.10 8.00 a1.9 1.9 0 1 0 3.8 0 a1.9 1.9 0 1 0 -3.8 0Z" fill="#fefefe" fill-rule="evenodd" stroke="#fefefe" stroke-width="0.4" stroke-linejoin="round"/></g>
<g transform="translate(1156.00 1502.40)"><circle cx="4" cy="4.0" r="3.4" fill="#fefefe"/><circle cx="4" cy="13.65" r="3.4" fill="#fefefe"/><circle cx="4" cy="23.3" r="3.4" fill="#fefefe"/></g>
<g transform="translate(1633.20 1267.50)"><path d="M0.3 7.4Q0.3 6.9 0.8 6.9H5.2L11.3 0.4Q11.9 -0.2 11.9 0.8V22.6Q11.9 23.6 11.3 23L5.2 15.9H0.8Q0.3 15.9 0.3 15.4Z" fill="#fefefe"/><path d="M16 6.9Q19.6 11.7 16 16.8" stroke="#fefefe" stroke-width="2.9" fill="none" stroke-linecap="round"/><path d="M21.3 3.4Q27 11.7 21.3 20.1" stroke="#fefefe" stroke-width="2.9" fill="none" stroke-linecap="round"/></g>
<g transform="translate(1701.60 1265.50)"><circle cx="4" cy="4.0" r="3.4" fill="#fefefe"/><circle cx="4" cy="13.65" r="3.4" fill="#fefefe"/><circle cx="4" cy="23.3" r="3.4" fill="#fefefe"/></g>
<g transform="translate(1633.20 1387.60)"><path d="M0.3 7.4Q0.3 6.9 0.8 6.9H5.2L11.3 0.4Q11.9 -0.2 11.9 0.8V22.6Q11.9 23.6 11.3 23L5.2 15.9H0.8Q0.3 15.9 0.3 15.4Z" fill="#fefefe"/><path d="M16 6.9Q19.6 11.7 16 16.8" stroke="#fefefe" stroke-width="2.9" fill="none" stroke-linecap="round"/><path d="M21.3 3.4Q27 11.7 21.3 20.1" stroke="#fefefe" stroke-width="2.9" fill="none" stroke-linecap="round"/></g>
<g transform="translate(1701.60 1385.60)"><circle cx="4" cy="4.0" r="3.4" fill="#fefefe"/><circle cx="4" cy="13.65" r="3.4" fill="#fefefe"/><circle cx="4" cy="23.3" r="3.4" fill="#fefefe"/></g>
<g transform="translate(2031.85 1207.00)"><path d="M2 6.6L6.45 2L10.9 6.6" stroke="#d4d5de" stroke-width="1.5" fill="none" stroke-linecap="round"/></g>
<g transform="translate(2031.85 1219.80)"><path d="M2 2L6.45 6.6L10.9 2" stroke="#d4d5de" stroke-width="1.5" fill="none" stroke-linecap="round"/></g>
<g transform="translate(2026.35 1257.40)"><path d="M2 8.2L8.05 2L14.1 8.2" stroke="#fefefe" stroke-width="2" fill="none" stroke-linecap="round"/></g>
<g transform="translate(2026.35 1279.70)"><path d="M2 2L8.05 8.2L14.1 2" stroke="#fefefe" stroke-width="2" fill="none" stroke-linecap="round"/></g>
<g transform="translate(1889.40 1316.10)"><path d="M0 11.3H22.6M11.3 0V22.6" stroke="#fefefe" stroke-width="3.7" fill="none"/></g>
<g transform="translate(1952.50 1314.00)"><path d="M1 3.7H25.2" stroke="#d4d5de" stroke-width="2.6" fill="none"/><path d="M7.4 2.6L9 1.1H17.2L18.8 2.6" stroke="#d4d5de" stroke-width="1.8" fill="none" stroke-linejoin="round"/><path d="M4.1 5V21.8Q4.1 24.8 7.1 24.8H19.1Q22.1 24.8 22.1 21.8V5" stroke="#d4d5de" stroke-width="3.3" fill="none"/><path d="M9.7 8.3V20.3M13.1 8.3V20.3M16.6 8.3V20.3" stroke="#d4d5de" stroke-width="1.8" fill="none"/></g>
<g transform="translate(2024.70 1313.45)"><circle cx="4" cy="4.0" r="3.4" fill="#d4d5de"/><circle cx="4" cy="13.8" r="3.4" fill="#d4d5de"/><circle cx="4" cy="23.6" r="3.4" fill="#d4d5de"/></g>
<g transform="translate(2514.00 1337.30)"><path d="M11.57 6.90 L11.91 3.91 L16.09 3.91 L16.43 6.90 L17.30 7.26 L19.65 5.39 L22.61 8.35 L20.74 10.70 L21.10 11.57 L24.09 11.91 L24.09 16.09 L21.10 16.43 L20.74 17.30 L22.61 19.65 L19.65 22.61 L17.30 20.74 L16.43 21.10 L16.09 24.09 L11.91 24.09 L11.57 21.10 L10.70 20.74 L8.35 22.61 L5.39 19.65 L7.26 17.30 L6.90 16.43 L3.91 16.09 L3.91 11.91 L6.90 11.57 L7.26 10.70 L5.39 8.35 L8.35 5.39 L10.70 7.26Z M8.40 14.00 a5.6 5.6 0 1 0 11.2 0 a5.6 5.6 0 1 0 -11.2 0Z" fill="#fefefe" fill-rule="evenodd" stroke="#fefefe" stroke-width="1.6" stroke-linejoin="round"/></g>
</svg>
<div class="a" style="left:558.5px;top:662.5px;width:410px;height:848.8px;background:#1f212a;box-shadow:2px 3px 6px rgba(0,0,0,.45);border:1px solid #181a21;box-sizing:border-box"></div>
<svg class="a" style="left:0;top:0" width="2560" height="1600" viewBox="0 0 2560 1600">
<rect x="563.20" y="667.20" width="400.30" height="47.80" rx="5" fill="#284cb8"/>
</svg>
<div class="t" style="left:604.9px;top:676.9px;font-size:20px;color:#fefefe;letter-spacing:-0.03px;"><span id="t61">NDI™ Source</span></div>
<div class="t" style="left:604.9px;top:724.9px;font-size:20px;color:#fefefe;"><span id="t62"><span class="k" style="width:119.05px"><span style="transform:scaleX(0.8351)">アプリケーション</span></span>音声<span class="k" style="width:73.40px"><span style="transform:scaleX(0.8351)">キャプチャ</span></span> (<span class="k" style="width:48.06px"><span style="transform:scaleX(0.8351)">ベータ</span></span>版)</span></div>
<div class="t" style="left:604.9px;top:772.9px;font-size:20px;color:#fefefe;"><span id="t63"><span class="k" style="width:145.80px"><span style="transform:scaleX(0.8429)">ウィンドウキャプチャ</span></span></span></div>
<div class="t" style="left:604.9px;top:820.9px;font-size:20px;color:#fefefe;"><span id="t64"><span class="k" style="width:118.40px"><span style="transform:scaleX(0.8159)">ゲームキャプチャ</span></span></span></div>
<div class="t" style="left:604.9px;top:868.9px;font-size:20px;color:#fefefe;"><span id="t65"><span class="k" style="width:44.30px"><span style="transform:scaleX(0.8057)">シーン</span></span></span></div>
<div class="t" style="left:604.9px;top:916.9px;font-size:20px;color:#fefefe;"><span id="t66"><span class="k" style="width:59.88px"><span style="transform:scaleX(0.8592)">テキスト</span></span> (GDI+)</span></div>
<div class="t" style="left:604.9px;top:964.9px;font-size:20px;color:#fefefe;"><span id="t67"><span class="k" style="width:60.80px"><span style="transform:scaleX(0.8439)">ブラウザ</span></span></span></div>
<div class="t" style="left:604.9px;top:1012.9px;font-size:20px;color:#fefefe;"><span id="t68"><span class="k" style="width:102.00px"><span style="transform:scaleX(0.8356)">メディアソース</span></span></span></div>
<div class="t" style="left:604.9px;top:1060.9px;font-size:20px;color:#fefefe;"><span id="t69">映像<span class="k" style="width:136.80px"><span style="transform:scaleX(0.8523)">キャプチャデバイス</span></span></span></div>
<div class="t" style="left:604.9px;top:1108.9px;font-size:20px;color:#fefefe;letter-spacing:-0.05px;"><span id="t70">画像</span></div>
<div class="t" style="left:604.9px;top:1156.9px;font-size:20px;color:#fefefe;"><span id="t71">画像<span class="k" style="width:102.50px"><span style="transform:scaleX(0.8415)">スライドショー</span></span></span></div>
<div class="t" style="left:604.9px;top:1204.9px;font-size:20px;color:#fefefe;"><span id="t72">画面<span class="k" style="width:74.00px"><span style="transform:scaleX(0.8420)">キャプチャ</span></span></span></div>
<div class="t" style="left:604.9px;top:1252.9px;font-size:20px;color:#fefefe;"><span id="t73">色<span class="k" style="width:43.70px"><span style="transform:scaleX(0.8214)">ソース</span></span></span></div>
<div class="t" style="left:604.9px;top:1300.9px;font-size:20px;color:#fefefe;"><span id="t74">音声入力<span class="k" style="width:75.80px"><span style="transform:scaleX(0.8624)">キャプチャ</span></span></span></div>
<div class="t" style="left:604.9px;top:1348.9px;font-size:20px;color:#fefefe;"><span id="t75">音声出力<span class="k" style="width:75.80px"><span style="transform:scaleX(0.8624)">キャプチャ</span></span></span></div>
<svg class="a" style="left:0;top:0" width="2560" height="1600" viewBox="0 0 2560 1600">
<rect x="572.70" y="1391.60" width="381.30" height="2.00" fill="#3c404b"/>
<rect x="572.70" y="1451.00" width="381.30" height="2.00" fill="#3c404b"/>
</svg>
<div class="t" style="left:604.9px;top:1408.9px;font-size:20px;color:#fefefe;"><span id="t76"><span class="k" style="width:59.80px"><span style="transform:scaleX(0.8108)">グループ</span></span>化</span></div>
<div class="t" style="left:604.9px;top:1467.5px;font-size:20px;color:#fefefe;letter-spacing:0.27px;"><span id="t77">非推奨</span></div>
<svg class="a" style="left:0;top:0" width="2560" height="1600" viewBox="0 0 2560 1600">
<g transform="translate(569.40 679.20)"><path d="M5.2 2.6H13.5L20.7 9.3V21.6Q20.7 23.4 18.9 23.4H6.8Q5 23.4 5 21.6V4.4Q5 2.6 6.8 2.6Z" fill="none" stroke="#fefefe" stroke-width="3.3" stroke-linejoin="round"/><path d="M13 2.6V8.2Q13 9.8 14.6 9.8H20.7L13.5 2.6Z" fill="#fefefe"/></g>
<g transform="translate(569.40 726.00)"><rect x="1.6" y="1.6" width="22.8" height="22.8" rx="2" fill="none" stroke="#fefefe" stroke-width="3.2"/><rect x="1.6" y="1.6" width="22.8" height="5.2" fill="#fefefe"/><path d="M5 10.6H8.2L12.6 7.6V20.6L8.2 17.4H5Z" fill="#fefefe"/><path d="M15 10.4Q17.3 14 15 17.8" stroke="#fefefe" stroke-width="1.7" fill="none" stroke-linecap="round"/><path d="M17.9 8.2Q21.6 14 17.9 20" stroke="#fefefe" stroke-width="1.7" fill="none" stroke-linecap="round"/></g>
<g transform="translate(569.40 774.00)"><rect x="0" y="0" width="26" height="26" rx="3.6" fill="#fefefe"/><rect x="3.6" y="10.2" width="18.8" height="12.4" fill="#1f212a"/><path d="M18.2 3.6L22 7.6M22 3.6L18.2 7.6" stroke="#1f212a" stroke-width="1.5" fill="none"/></g>
<g transform="translate(569.40 822.00)"><path d="M6.6 6.6H19.4Q26 6.6 26 12.4Q26 18.2 20.3 18.2Q17.3 18.2 15.6 15.6H10.4Q8.7 18.2 5.7 18.2Q0 18.2 0 12.4Q0 6.6 6.6 6.6Z" fill="#fefefe"/><path d="M3.6 12.3H8.6M6.1 9.8V14.8" stroke="#1f212a" stroke-width="1.5" fill="none"/><circle cx="18.2" cy="10.2" r="1.55" fill="#1f212a"/><circle cx="21.2" cy="13.4" r="1.55" fill="#1f212a"/></g>
<g transform="translate(569.40 870.00)"><rect x="3.3" y="3.3" width="3.6" height="3.6" fill="#fefefe"/><rect x="9.6" y="3.3" width="15.1" height="3.6" fill="#fefefe"/><rect x="3.3" y="11.3" width="3.6" height="3.6" fill="#fefefe"/><rect x="9.6" y="11.3" width="15.1" height="3.6" fill="#fefefe"/><rect x="3.3" y="19.3" width="3.6" height="3.6" fill="#fefefe"/><rect x="9.6" y="19.3" width="15.1" height="3.6" fill="#fefefe"/></g>
<g transform="translate(569.40 966.00)"><circle cx="13" cy="13" r="13" fill="#fefefe"/><path d="M9.3 4.2Q6.3 6.6 5.4 9.9Q4.2 12.4 4.5 14.6Q4.8 17.4 6.3 19.4L7.2 18.2L7.5 14.6Q7.4 12.6 7.8 11Q8.8 8 10.5 5.7Z" fill="#1f212a"/><path d="M16.1 5.4L18.8 4.8Q20.4 5.8 21.2 7.5Q22.2 9.4 22.4 11.6L19.7 12.5L18.8 15.8L17 18.5L15.5 17V14L14 11.6L14.9 8.7Z" fill="#1f212a"/><circle cx="13.4" cy="7.6" r="1.1" fill="#1f212a"/></g>
<g transform="translate(569.40 1014.00)"><path d="M4.4 3.4L22 13L4.4 23Z" fill="#fefefe" stroke="#fefefe" stroke-width="2.6" stroke-linejoin="round"/></g>
<g transform="translate(569.40 1062.00)"><path d="M2.3 6.3H7.6L8.4 3.6H17.9L18.7 6.3H23.9Q24.7 6.3 24.7 7.1V22.5Q24.7 23.3 23.9 23.3H2.3Q1.5 23.3 1.5 22.5V7.1Q1.5 6.3 2.3 6.3Z" fill="#fefefe"/><circle cx="13.1" cy="14.6" r="5.1" fill="none" stroke="#1f212a" stroke-width="2.9"/></g>
<g transform="translate(569.40 1110.00)"><rect x="3.2" y="3.7" width="19.8" height="19.9" rx="4" fill="none" stroke="#fefefe" stroke-width="3.4"/><circle cx="9.9" cy="9.9" r="1.9" fill="#fefefe"/><path d="M6 20.2L10.6 14.6L12.6 16.6L15.6 13L20.4 20.2Z" fill="#fefefe"/></g>
<g transform="translate(569.40 1158.00)"><path d="M0.3 3.3H23.7V6.5H22.6V20H1.4V6.5H0.3Z" fill="#fefefe"/><path d="M12 20V23.4M12 22.6L8.4 26M12 22.6L15.6 26" stroke="#fefefe" stroke-width="1.7" fill="none"/><path d="M11.4 9.2A3.3 3.3 0 1 0 15 12.8H11.4Z" fill="#1f212a"/><path d="M12.6 8A3.3 3.3 0 0 1 16 11.5H12.6Z" fill="#1f212a"/></g>
<g transform="translate(569.40 1206.00)"><rect x="1.7" y="3.7" width="22.2" height="17.8" rx="4" fill="none" stroke="#fefefe" stroke-width="3.4"/><path d="M7 24.4Q13 25.8 19 24.4" stroke="#fefefe" stroke-width="1.3" fill="none" opacity=".8"/></g>
<g transform="translate(569.40 1254.00)"><path d="M16.6 10.4L24.6 1.6" stroke="#fefefe" stroke-width="4.4" stroke-linecap="round" fill="none"/><path d="M1.5 24.6V17.6A6.6 6.6 0 1 1 8.1 24.6Z" fill="#fefefe"/></g>
<g transform="translate(569.40 1302.00)"><rect x="8" y="2" width="8.8" height="16.4" rx="4.4" fill="#fefefe"/><path d="M5.8 8.8V14.2A6.6 6.6 0 0 0 19 14.2V8.8" stroke="#fefefe" stroke-width="1.9" fill="none"/><path d="M12.4 20.8V23.6" stroke="#fefefe" stroke-width="2.6" fill="none"/><rect x="4.9" y="22.9" width="15" height="3.2" fill="#fefefe"/></g>
<g transform="translate(569.10 1351.60)"><path d="M0.3 7.4Q0.3 6.9 0.8 6.9H5.2L11.3 0.4Q11.9 -0.2 11.9 0.8V22.6Q11.9 23.6 11.3 23L5.2 15.9H0.8Q0.3 15.9 0.3 15.4Z" fill="#fefefe"/><path d="M16 6.9Q19.6 11.7 16 16.8" stroke="#fefefe" stroke-width="2.9" fill="none" stroke-linecap="round"/><path d="M21.3 3.4Q27 11.7 21.3 20.1" stroke="#fefefe" stroke-width="2.9" fill="none" stroke-linecap="round"/></g>
<g transform="translate(569.50 1411.00)"><path d="M1.8 18V4.6Q1.8 1.65 4.8 1.65H9.8L13 4.4H18.5Q20.5 4.4 20.5 6.4V9.4" fill="none" stroke="#fefefe" stroke-width="3.3" stroke-linejoin="round"/><path d="M6 15.9L8.9 9.8H23Q24.7 9.8 24.2 11.4L21.6 19.5Q21.1 21.2 19.3 21.2H5Q1.8 21.2 1.8 18" fill="none" stroke="#fefefe" stroke-width="3.3" stroke-linecap="round" stroke-linejoin="round"/></g>
<g transform="translate(944.90 1472.50)"><path d="M0 0L10.4 9.3L0 18.5Z" fill="#fefefe"/></g>
</svg>
<div class="t" style="left:570.4px;top:917.3px;font-size:20.5px;font-weight:700;letter-spacing:-1.5px;color:#fefefe">ab</div>
</body></html>
